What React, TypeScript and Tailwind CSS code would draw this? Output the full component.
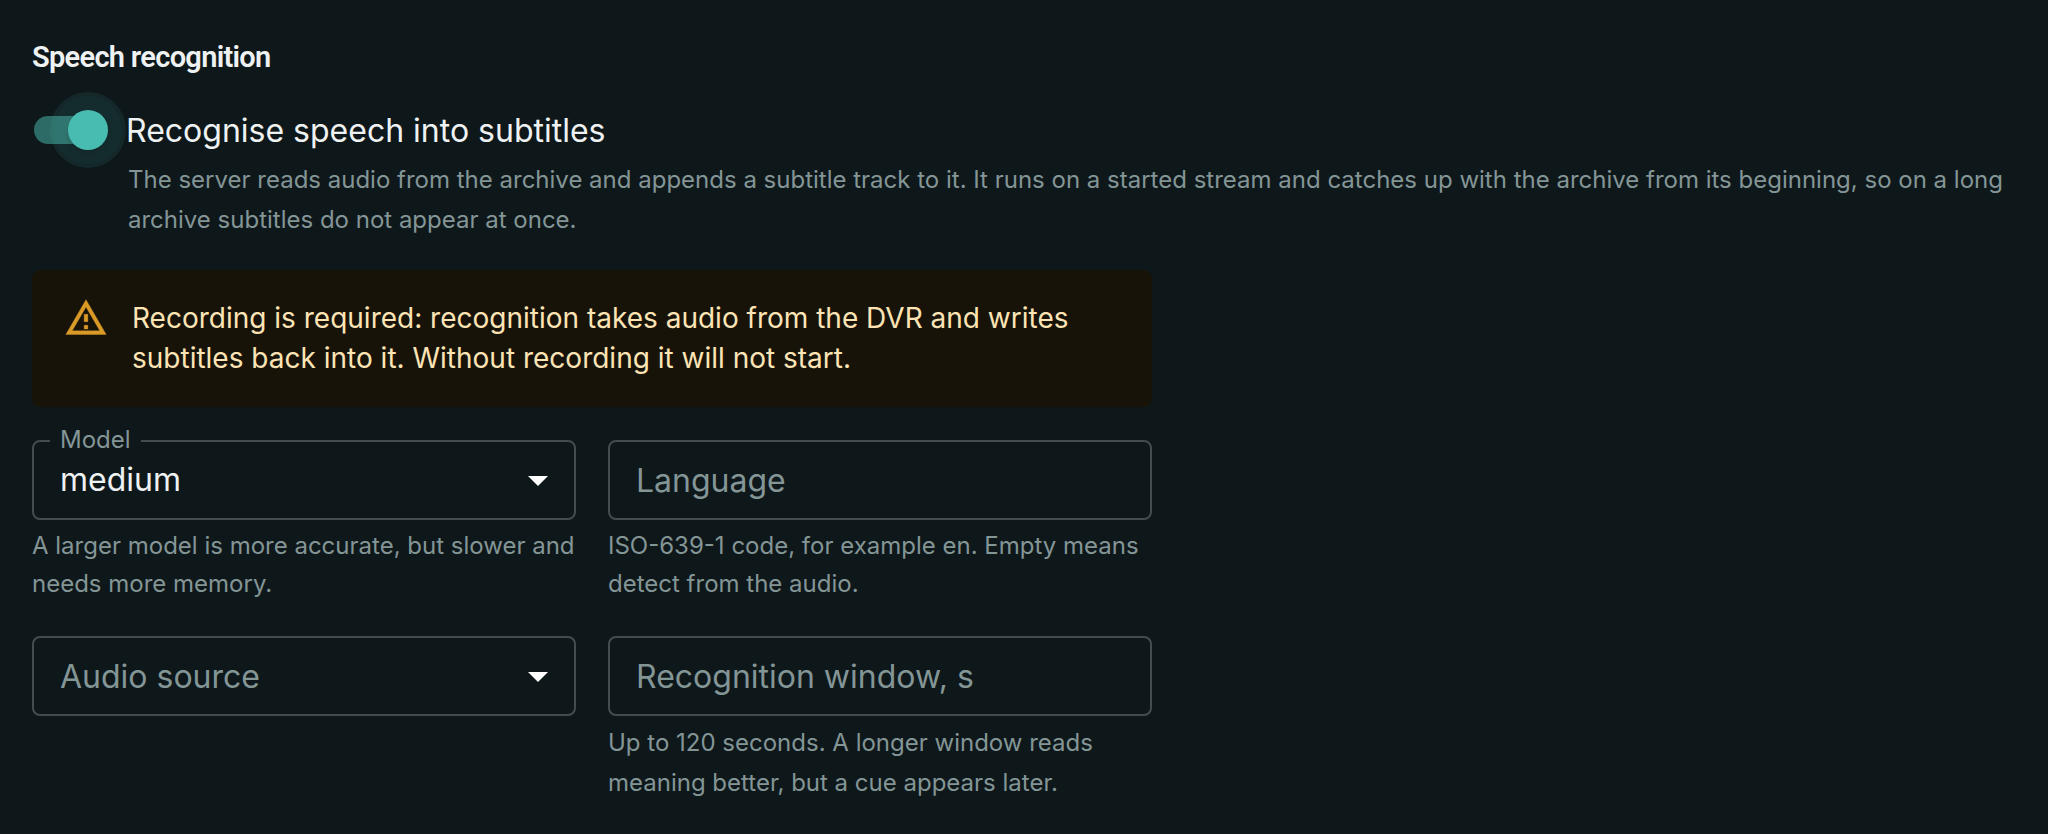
import React from "react";

const Arrow = () => (
  <svg viewBox="0 0 24 24" className="ml-auto mr-[12px] h-12 w-12 shrink-0 fill-white">
    <path d="M7 10l5 5 5-5z" />
  </svg>
);

const Helper = ({ children, leading }: { children: React.ReactNode; leading: string }) => (
  <p className={`mt-[7px] text-[24px] text-[#849596] ${leading}`}>{children}</p>
);

export default function App() {
  return (
    <div className="min-h-[834px] bg-[#0e181b] pl-8 pr-[16px] pt-8 font-['Inter',sans-serif]">
      <h2 className="font-['Roboto',sans-serif] text-[29px] font-semibold leading-[50px] tracking-[-0.7px] text-[#eef2f2]">
        Speech recognition
      </h2>

      <div className="ml-[-22px] mt-[10px] flex items-start">
        <div className="flex h-[76px] w-[116px] shrink-0 items-center pl-[24px]">
          <div className="flex h-[28px] w-[68px] items-center justify-end rounded-full bg-[#2d6b66]">
            <div className="mr-[-24px] flex h-[76px] w-[76px] shrink-0 items-center justify-center rounded-full bg-[#4dbdb0]/10">
              <div className="flex h-[68px] w-[68px] items-center justify-center rounded-full bg-[#4dbdb0]/[0.03]">
                <div className="h-10 w-10 rounded-full bg-[#49bcb1] shadow-md" />
              </div>
            </div>
          </div>
        </div>
        <div className="min-w-0 pt-[15px]">
          <div className="text-[32px] leading-[48px] text-[#eef2f2]">Recognise speech into subtitles</div>
          <p className="ml-[2px] mt-[5px] text-[24px] leading-[40px] text-[#849596]">
            The server reads audio from the archive and appends a subtitle track to it. It runs on a started stream and
            catches up with the archive from its beginning, so on a long archive subtitles do not appear at once.
          </p>
        </div>
      </div>

      <div className="w-[1120px]">
        <div className="mt-[30px] flex rounded-lg bg-[#181309] px-8 py-3">
          <svg
            viewBox="0 0 24 24"
            className="mr-6 mt-[14px] h-11 w-11 shrink-0 fill-[#da9a28] stroke-[#da9a28] stroke-[0.2]"
          >
            <path d="M12 5.99 19.53 19H4.47zM12 2 1 21h22zm1 14h-2v2h2zm0-6h-2v4h2z" />
          </svg>
          <div className="pb-[17px] pt-4 text-[28px] leading-[40px] text-[#fde4b5]">
            Recording is required: recognition takes audio from the DVR and writes subtitles back into it. Without
            recording it will not start.
          </div>
        </div>

        <div className="mt-[33px] grid grid-cols-2 gap-x-8 gap-y-[33px]">
          <div>
            <div className="relative flex h-20 items-center rounded-lg border-2 border-[#434c4f] pl-[26px] text-[32px] text-[#eef2f2]">
              <span className="absolute left-[16px] top-[-18px] bg-[#0e181b] px-[10px] text-[24px] leading-[32px] text-[#849596]">
                Model
              </span>
              medium
              <Arrow />
            </div>
            <Helper leading="leading-[38px]">A larger model is more accurate, but slower and needs more memory.</Helper>
          </div>
          <div>
            <div className="h-20 rounded-lg border-2 border-[#434c4f]">
              <input
                readOnly
                placeholder="Language"
                className="h-full w-full bg-transparent pl-[26px] text-[32px] outline-none placeholder:text-[#849596]"
              />
            </div>
            <Helper leading="leading-[38px]">ISO-639-1 code, for example en. Empty means detect from the audio.</Helper>
          </div>
          <div>
            <div className="flex h-20 items-center rounded-lg border-2 border-[#434c4f] pl-[26px] text-[32px] text-[#849596]">
              <span className="pt-[2px]">Audio source</span>
              <Arrow />
            </div>
          </div>
          <div>
            <div className="h-20 rounded-lg border-2 border-[#434c4f]">
              <input
                readOnly
                placeholder="Recognition window, s"
                className="h-full w-full bg-transparent pl-[26px] text-[32px] outline-none placeholder:text-[#849596]"
              />
            </div>
            <Helper leading="leading-[40px]">Up to 120 seconds. A longer window reads meaning better, but a cue appears later.</Helper>
          </div>
        </div>
      </div>
    </div>
  );
}
